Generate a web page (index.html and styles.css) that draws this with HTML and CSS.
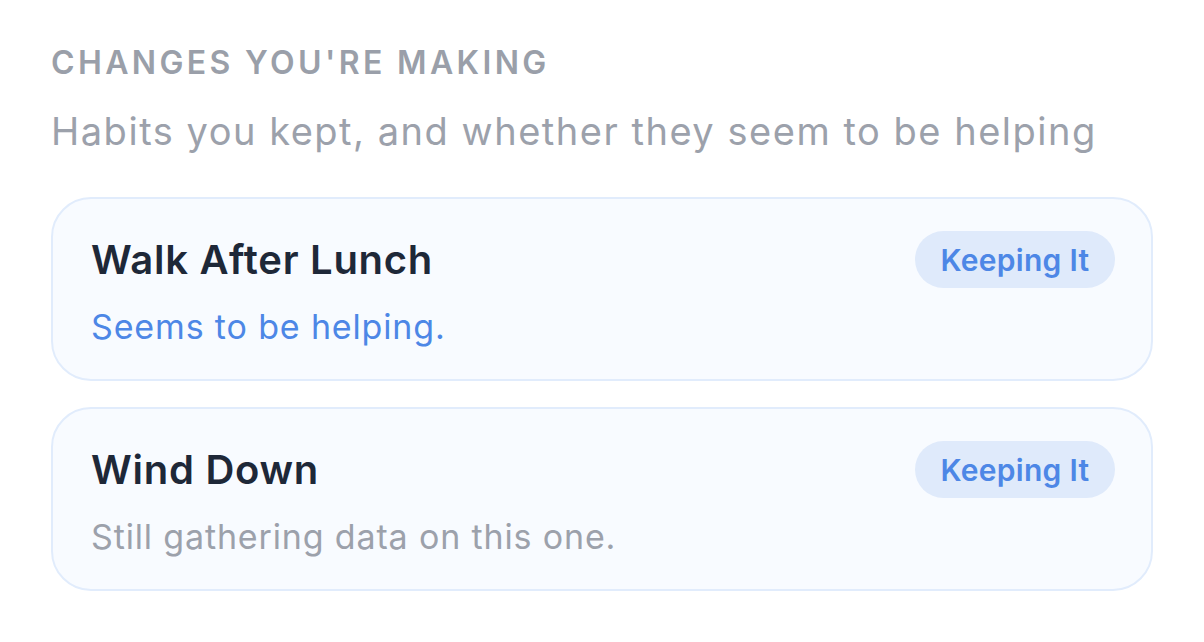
FILE: index.html
```html
<!DOCTYPE html>
<html lang="en">
<head>
<meta charset="utf-8">
<title>Changes you're making</title>
<link rel="stylesheet" href="styles.css">
</head>
<body>
<section class="changes">
  <h2 class="eyebrow">CHANGES YOU'RE MAKING</h2>
  <p class="subtitle">Habits you kept, and whether they seem to be helping</p>
  <div class="card-list">
    <article class="card">
      <div class="card-head">
        <h3 class="card-title">Walk After Lunch</h3>
        <span class="badge">Keeping It</span>
      </div>
      <p class="card-note note-positive">Seems to be helping.</p>
    </article>
    <article class="card">
      <div class="card-head">
        <h3 class="card-title">Wind Down</h3>
        <span class="badge">Keeping It</span>
      </div>
      <p class="card-note note-neutral">Still gathering data on this one.</p>
    </article>
  </div>
</section>
</body>
</html>
```

FILE: styles.css
```css
* { box-sizing: border-box; }
html, body { margin: 0; padding: 0; background: #ffffff; }
body {
  font-family: Inter, "Noto Sans", "Liberation Sans", sans-serif;
  -webkit-font-smoothing: antialiased;
}
.changes {
  padding: 43px 51px 0 51px;
  width: 1204px;
}
.eyebrow {
  margin: 0;
  font-size: 32px;
  line-height: 40px;
  font-weight: 600;
  letter-spacing: 0.105em;
  color: #9a9fa9;
}
.subtitle {
  margin: 23px 0 0 0;
  font-size: 38px;
  line-height: 50px;
  font-weight: 400;
  letter-spacing: 0.04em;
  color: #9ca1ab;
  white-space: nowrap;
}
.card-list {
  margin-top: 41px;
  display: flex;
  flex-direction: column;
  gap: 26px;
  width: 1102px;
}
.card {
  height: 184px;
  border: 2px solid #e1ecfc;
  border-radius: 40px;
  background: #f8fbff;
  padding: 32px 36px 0 38px;
}
.card-head {
  display: flex;
  align-items: center;
  justify-content: space-between;
}
.card-title {
  margin: 0;
  font-size: 40px;
  line-height: 57px;
  font-weight: 600;
  letter-spacing: 0.018em;
  color: #1e2838;
}
.badge {
  display: inline-flex;
  align-items: center;
  justify-content: center;
  height: 57px;
  width: 200px;
  border-radius: 999px;
  background: #dfeafb;
  color: #4d87e6;
  font-size: 30px;
  font-weight: 600;
  letter-spacing: 0.01em;
}
.card-note {
  margin: 17px 0 0 0;
  font-size: 34px;
  line-height: 44px;
  letter-spacing: 0.025em;
}
.note-positive { color: #4d87e6; }
.note-neutral { color: #9ca1ab; }
```
